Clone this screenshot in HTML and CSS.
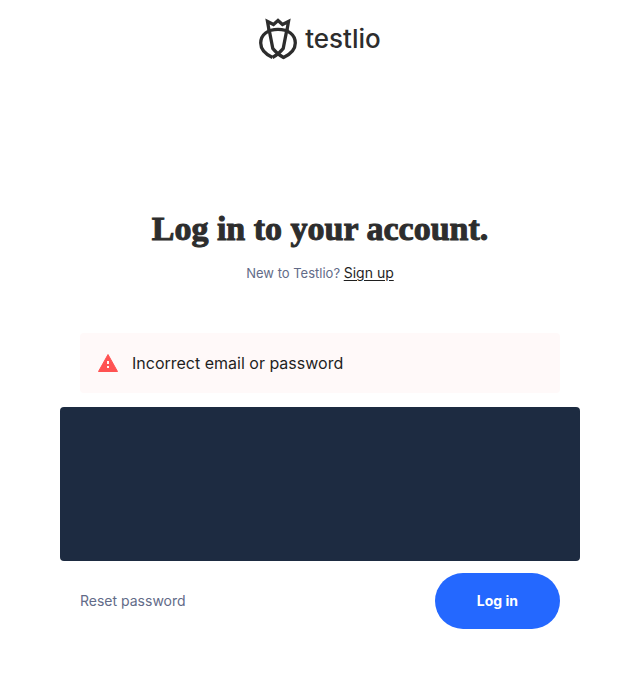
FILE: index.html
```html
<!DOCTYPE html>
<html lang="en">
<head>
<meta charset="utf-8">
<meta name="viewport" content="width=device-width, initial-scale=1">
<title>Log in - Testlio</title>
<link rel="stylesheet" href="styles.css">
</head>
<body>
<header class="brand">
  <svg class="brand-mark" viewBox="0 0 38 42" aria-hidden="true">
    <g fill="none" stroke="currentColor" stroke-width="3.300" stroke-linejoin="miter">
      <path d="M10 12 8.500 3.500 14.500 6.500 19 2.500 23.500 6.500 29.500 3.500 28 12"/>
      <path d="M13.500 39.500C6 36 1.700 31 1.700 25 1.700 16.500 9 11.300 19 11.300S36.300 16.500 36.300 25C36.300 31 32 36 24.500 39.500Q18.500 36.500 13.800 30.500L10 11"/>
      <path d="M28 11 24.200 30.500Q19.500 36.500 13.500 39.500"/>
    </g>
  </svg>
  <span class="brand-name">testlio</span>
</header>
<main class="login">
  <h1 class="title">Log in to your account.</h1>
  <p class="signup">New to Testlio? <a class="signup-link" href="#">Sign up</a></p>
  <div class="alert" role="alert">
    <svg class="alert-icon" viewBox="0 0 22 20" aria-hidden="true">
      <path fill="#ff5252" d="M11 1.500 20.500 18.500H1.500Z" stroke="#ff5252" stroke-linejoin="round"/>
      <path fill="#fff9f9" d="M10 8h2v3h-2zM10 13h2v2h-2z"/>
    </svg>
    <span>Incorrect email or password</span>
  </div>
  <div class="panel"></div>
  <div class="actions">
    <a class="reset" href="#">Reset password</a>
    <button class="submit" type="button">Log in</button>
  </div>
</main>
</body>
</html>
```
FILE: styles.css
```css
body {
  margin: 0;
  padding: 18px 55px 70px 60px;
  background: #fff;
  color: #2d2d2d;
  font-family: Inter, "Liberation Sans", sans-serif;
}

.brand {
  display: flex;
  justify-content: center;
  align-items: center;
  gap: 8px;
}

.brand-mark {
  width: 38px;
  height: 42px;
}

.brand-name {
  font-size: 26px;
  font-weight: 500;
  line-height: 42px;
}

.login {
  max-width: 520px;
  margin: 0 auto;
}

.title {
  margin: 147px 0 0;
  font-family: "Liberation Serif", serif;
  font-size: 34px;
  font-weight: 700;
  line-height: 44px;
  text-align: center;
  -webkit-text-stroke: 1px currentColor;
}

.signup {
  margin: 12px 0 0;
  color: #626b88;
  font-size: 13px;
  line-height: 20px;
  text-align: center;
}

.signup-link {
  color: #1f1f1f;
  font-size: 14px;
  text-underline-offset: 2px;
}

.alert {
  display: flex;
  align-items: center;
  gap: 13px;
  margin: 50px 20px 14px;
  padding: 18px 17px;
  border-radius: 4px;
  background: #fff9f9;
  color: #1f1f1f;
  font-size: 16px;
  line-height: 24px;
}

.alert-icon {
  width: 22px;
  height: 20px;
}

.panel {
  height: 154px;
  border-radius: 4px;
  background: #1d2b41;
}

.actions {
  display: flex;
  justify-content: space-between;
  align-items: center;
  margin: 12px 20px 0;
}

.reset {
  color: #626b88;
  font-size: 14px;
  line-height: 20px;
  text-decoration: none;
}

.submit {
  padding: 18px 42px;
  border: 0;
  border-radius: 28px;
  background: #2468ff;
  color: #fff;
  font: 700 14px/20px Inter, "Liberation Sans", sans-serif;
}
```
